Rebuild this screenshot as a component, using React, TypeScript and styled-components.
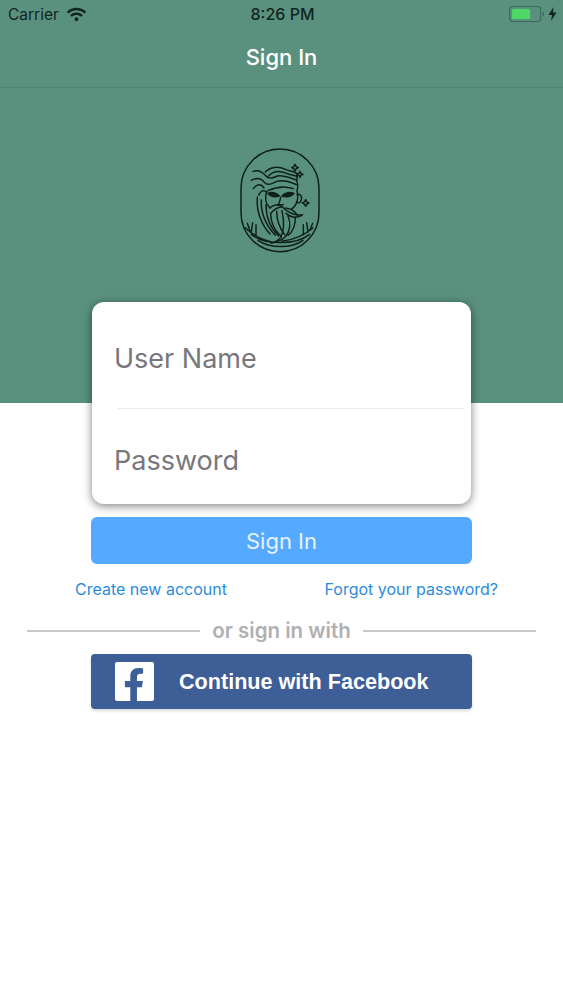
import React from 'react';
import styled, { createGlobalStyle } from 'styled-components';
import { FaFacebookF, FaWifi } from 'react-icons/fa';

const GlobalStyle = createGlobalStyle`
  html, body {
    margin: 0;
    padding: 0;
    background: #fff;
  }
  body {
    font-family: "Inter", "Liberation Sans", sans-serif;
  }
`;

const Page = styled.div`
  width: 563px;
  height: 1000px;
  overflow: hidden;
  display: flex;
  flex-direction: column;
  align-items: center;
  background: #fff;
`;

const Hero = styled.header`
  width: 100%;
  height: 403px;
  flex-shrink: 0;
  background: #5a917e;
  display: flex;
  flex-direction: column;
`;

const StatusBar = styled.div`
  height: 28px;
  padding: 0 6px 0 8px;
  display: grid;
  grid-template-columns: 1fr auto 1fr;
  align-items: center;
  color: #10251e;
  font-size: 15.5px;
`;

const StatusLeft = styled.div`
  display: flex;
  align-items: center;
  gap: 8px;
`;

const StatusTime = styled.div`
  font-size: 16px;
  font-weight: 500;
`;

const StatusRight = styled.div`
  display: flex;
  align-items: center;
  justify-content: flex-end;
  gap: 3px;
`;

const NavBar = styled.div`
  height: 58px;
  display: flex;
  align-items: center;
  justify-content: center;
  padding-bottom: 1px;
  border-bottom: 1px solid #4f8573;
  color: #fff;
  font-size: 22px;
  font-weight: 500;
`;

const LogoRow = styled.div`
  display: flex;
  justify-content: center;
  padding: 60px 3px 0 0;
`;

const Card = styled.form`
  width: 379px;
  height: 202px;
  margin-top: -101px;
  flex-shrink: 0;
  background: #fff;
  border-radius: 12px;
  box-shadow: 0 2px 10px rgba(0, 0, 0, 0.5);
  display: flex;
  flex-direction: column;
  position: relative;
`;

const Field = styled.div<{ $height: number }>`
  height: ${p => p.$height}px;
  box-sizing: border-box;
  padding: 7px 0 0 22px;
  display: flex;
  align-items: center;
  color: #77777b;
  font-size: 27px;
`;

const Divider = styled.div`
  height: 1px;
  margin: 0 7px 0 26px;
  background: #ececee;
`;

const SubmitButton = styled.button`
  width: 381px;
  height: 47px;
  margin-top: 13px;
  border: 0;
  border-radius: 6px;
  background: #55a9ff;
  color: #e6f2ff;
  font-family: inherit;
  font-size: 22px;
`;

const LinkRow = styled.div`
  width: 100%;
  box-sizing: border-box;
  margin-top: 15px;
  padding: 0 65px 0 75px;
  display: flex;
  justify-content: space-between;
`;

const TextLink = styled.a`
  color: #2b8bdc;
  font-size: 16px;
  line-height: 20px;
`;

const OrRow = styled.div`
  width: 100%;
  box-sizing: border-box;
  margin-top: 20px;
  padding: 0 27px;
  display: flex;
  align-items: center;
  gap: 12px;
  color: #b0b0b3;
  font-size: 20.5px;
  font-weight: 600;
  line-height: 24px;
`;

const OrLine = styled.div`
  flex: 1;
  height: 2px;
  background: #c8c8ca;
`;

const FacebookButton = styled.button`
  width: 381px;
  height: 55px;
  margin-top: 11px;
  padding: 0 0 0 24px;
  border: 0;
  border-radius: 4px;
  background: #3d5e97;
  box-shadow: 0 2px 3px rgba(0, 0, 0, 0.15);
  color: #fff;
  font-family: "Liberation Sans", sans-serif;
  font-size: 21.6px;
  font-weight: 700;
  display: flex;
  align-items: center;
  gap: 25px;
`;

const FacebookBadge = styled.span`
  width: 39px;
  height: 39px;
  border-radius: 2px;
  background: #fff;
  color: #3d5e97;
  display: flex;
  align-items: flex-end;
  justify-content: flex-end;
  overflow: hidden;
  font-size: 34px;
  svg {
    display: block;
    margin: 0 3px -1px 0;
  }
`;

const BatteryIcon = () => (
  <svg width="36" height="18" viewBox="0 0 36 18">
    <rect x="0.6" y="1.5" width="31" height="15" rx="3.5" fill="none" stroke="#3c6b5b" strokeWidth="1.2" />
    <rect x="3" y="4" width="18" height="10" rx="1.5" fill="#4cd964" />
    <rect x="33.5" y="7" width="1.5" height="4" rx="0.7" fill="#3c6b5b" />
  </svg>
);

const BoltIcon = () => (
  <svg width="9" height="14" viewBox="0 0 9 14">
    <path d="M5.5 0 L0.5 8 H4 L3 14 L8.5 5.5 H5 Z" fill="#10251e" />
  </svg>
);

const starPath = (x: number, y: number, r: number) =>
  `M${x} ${y - r} L${x + r / 3} ${y - r / 3} L${x + r} ${y} L${x + r / 3} ${y + r / 3} L${x} ${y + r} L${x - r / 3} ${y + r / 3} L${x - r} ${y} L${x - r / 3} ${y - r / 3} Z`;

// hand drawn, coordinates are in the 3x crop of the logo
const Logo = () => (
  <svg width="80" height="105" viewBox="60 36 240 315" fill="none" stroke="#0e2019" strokeWidth="4.4" strokeLinecap="round" strokeLinejoin="round">
    <rect x="63" y="39" width="234" height="308" rx="117" />
    {/* water */}
    <path d="M76 275 C100 298 128 312 152 317" />
    <path d="M186 316 C222 310 256 296 279 275" />
    <path d="M94 295 C130 326 225 330 269 295" />
    <path d="M114 313 C150 338 215 338 249 313" />
    <path d="M82 262 L90 284 M98 260 L94 288 M108 266 V296" />
    <path d="M250 266 V296 M260 260 L264 288 M278 262 L270 282" />
    {/* hair */}
    <path d="M136 108 C150 92 176 90 196 100 C208 106 220 104 230 112" />
    <path d="M146 120 C160 104 180 104 200 112 C212 118 222 116 232 122" />
    <path d="M99 106 C116 100 128 108 138 120 C146 132 160 126 172 120 C190 116 210 126 230 132" />
    <path d="M94 133 C110 124 124 126 134 140 C142 150 156 144 170 136 C190 130 210 138 230 146" />
    <path d="M100 158 C112 142 124 144 132 156" />
    <path d="M116 178 C122 164 130 160 140 168" />
    <path d="M144 164 C170 152 196 150 220 158" />
    {/* braid */}
    <path d="M230 114 C236 124 226 132 232 142 C238 152 228 160 232 170 C236 180 232 190 231 198" />
    {/* face */}
    <path d="M140 166 C134 186 136 204 150 216" />
    <path d="M231 176 C242 172 248 182 243 194 C240 202 234 202 230 198" />
    <path d="M230 198 C228 208 222 214 214 220" />
    <path d="M144 172 C154 168 168 170 178 180 C166 184 150 182 144 172 Z" fill="#0e2019" />
    <path d="M186 180 C196 170 210 168 222 172 C216 182 198 184 186 180 Z" fill="#0e2019" />
    <path d="M182 184 C180 194 178 200 176 204 M172 206 H190" />
    {/* moustache */}
    <path d="M150 216 C160 206 176 204 186 212 C196 222 218 240 248 236 C234 248 212 246 198 232" />
    <path d="M186 212 C172 214 160 222 152 232" />
    <path d="M196 216 C212 218 226 226 232 238" />
    {/* beard */}
    <path d="M112 184 C108 226 126 268 150 294" />
    <path d="M124 192 C122 232 140 270 166 298" />
    <path d="M138 206 C138 244 152 276 176 300" />
    <path d="M152 232 C152 258 164 284 184 302" />
    <path d="M170 226 C170 254 180 278 194 296" />
    <path d="M186 224 C192 252 194 282 182 304 C176 312 166 318 154 321" />
    <path d="M204 240 C214 262 210 286 196 302 C186 312 172 318 154 321" />
    <path d="M226 244 C226 268 218 288 204 298" />
    {/* stars */}
    <path d={starPath(225, 95, 10)} />
    <path d={starPath(240, 115, 9)} />
    <path d={starPath(257, 201, 10)} />
  </svg>
);

export default function App() {
  return (
    <Page>
      <GlobalStyle />
      <Hero>
        <StatusBar>
          <StatusLeft>
            Carrier
            <FaWifi size={19} />
          </StatusLeft>
          <StatusTime>8:26 PM</StatusTime>
          <StatusRight>
            <BatteryIcon />
            <BoltIcon />
          </StatusRight>
        </StatusBar>
        <NavBar>Sign In</NavBar>
        <LogoRow>
          <Logo />
        </LogoRow>
      </Hero>
      <Card>
        <Field $height={106}>User Name</Field>
        <Divider />
        <Field $height={95}>Password</Field>
      </Card>
      <SubmitButton type="button">Sign In</SubmitButton>
      <LinkRow>
        <TextLink>Create new account</TextLink>
        <TextLink>Forgot your password?</TextLink>
      </LinkRow>
      <OrRow>
        <OrLine />
        or sign in with
        <OrLine />
      </OrRow>
      <FacebookButton type="button">
        <FacebookBadge>
          <FaFacebookF />
        </FacebookBadge>
        Continue with Facebook
      </FacebookButton>
    </Page>
  );
}
